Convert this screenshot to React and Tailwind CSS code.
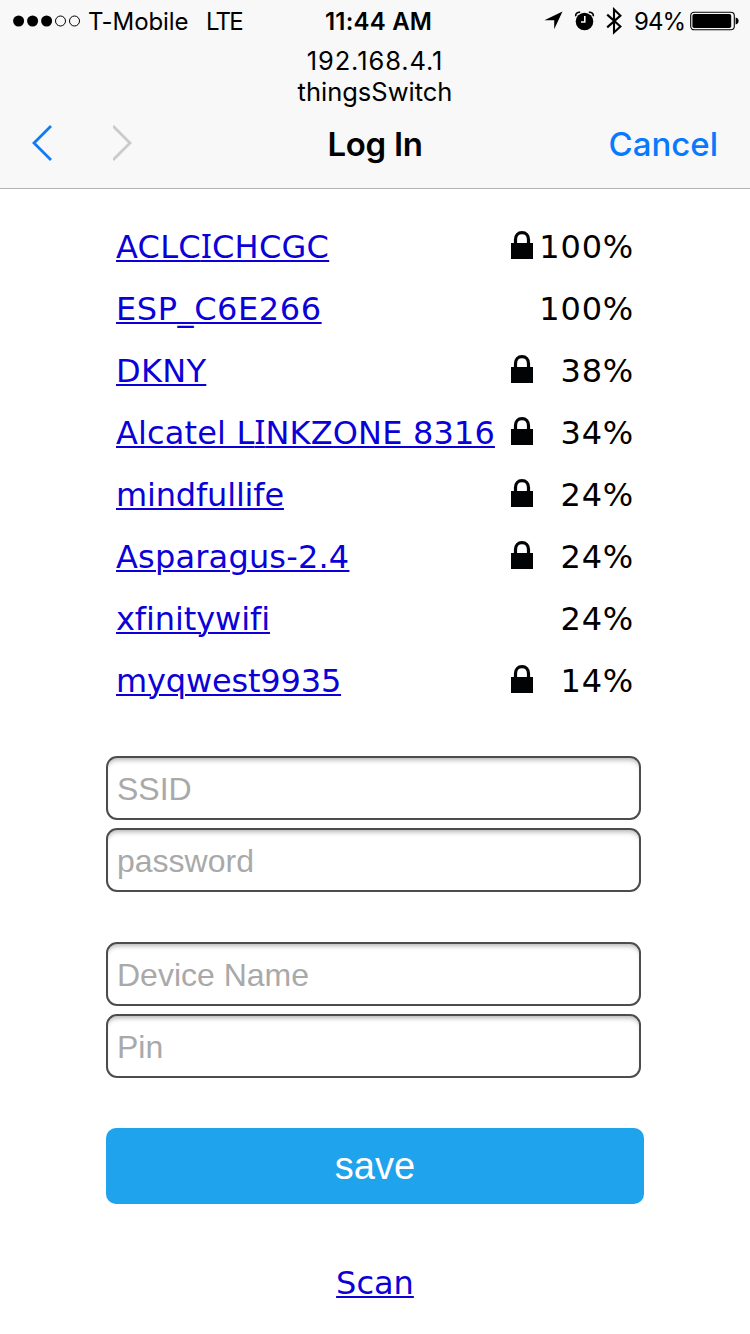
import React from "react";

const networks = [
  { name: "ACLCICHCGC", tracking: "tracking-[0.26px]", locked: true, signal: "100%" },
  { name: "ESP_C6E266", tracking: "tracking-[0.58px]", locked: false, signal: "100%" },
  { name: "DKNY", tracking: "tracking-[0.3px]", locked: true, signal: "38%" },
  { name: "Alcatel LINKZONE 8316", tracking: "tracking-[0.15px]", locked: true, signal: "34%" },
  { name: "mindfullife", tracking: "tracking-[-0.17px]", locked: true, signal: "24%" },
  { name: "Asparagus-2.4", tracking: "tracking-[0.19px]", locked: true, signal: "24%" },
  { name: "xfinitywifi", tracking: "tracking-[-0.09px]", locked: false, signal: "24%" },
  { name: "myqwest9935", tracking: "tracking-[-0.17px]", locked: true, signal: "14%" },
];

function Lock() {
  return (
    <svg width="22" height="28" viewBox="0 0 22 28" fill="none">
      <rect y="12" width="22" height="16" fill="#020305" />
      <path d="M4.5 13V8.5C4.5 4.4 7 1.6 11 1.6s6.5 2.8 6.5 6.9V13" stroke="#020305" strokeWidth="3.2" />
    </svg>
  );
}

function NetworkName({ name }) {
  return name.split(/(I)/).map((part, i) =>
    part === "I" ? (
      <span key={i} className="font-['Noto_Sans',sans-serif] leading-none">I</span>
    ) : (
      part
    )
  );
}

function StatusBar() {
  return (
    <div className="flex h-[41px] items-center text-[24px] leading-10">
      <div className="flex w-[325px] items-center pl-[13px]">
        <svg className="shrink-0" width="68" height="12" viewBox="0 0 68 12">
          <circle cx="5.6" cy="6" r="5.5" />
          <circle cx="19.6" cy="6" r="5.5" />
          <circle cx="33.6" cy="6" r="5.5" />
          <circle cx="47.5" cy="6" r="5" fill="none" stroke="#000" />
          <circle cx="61.5" cy="6" r="5" fill="none" stroke="#000" />
        </svg>
        <span className="ml-[7px] w-[118px] pt-[2px] tracking-[-0.1px]">T-Mobile</span>
        <span className="pt-[2px] tracking-[-1.8px]">LTE</span>
      </div>
      <span className="w-[219px] pt-[2px] font-semibold tracking-[0.2px]">11:44 AM</span>
      <svg className="shrink-0" width="19" height="19" viewBox="0 0 19 19">
        <path d="M18.5 0.5L10.2 18.3V9.3L0.4 9.2Z" />
      </svg>
      <svg className="ml-[12px] shrink-0" width="20" height="20" viewBox="0 0 20 20">
        <circle cx="9.5" cy="10.5" r="8.8" />
        <path d="M9.8 5V11H6" fill="none" stroke="#f8f8f8" strokeWidth="1.6" />
        <path d="M0.8 5.2C0.2 2.7 2.6 0.8 5.2 1.3M18.2 5.2C18.8 2.7 16.4 0.8 13.8 1.3" fill="none" stroke="#000" strokeWidth="1.6" />
      </svg>
      <svg className="ml-[11px] shrink-0" width="17" height="28" viewBox="0 0 17 28">
        <path d="M1.2 7.6L14.4 19.4L8 25.4V2.4L14.4 8.6L1.2 20.4" fill="none" stroke="#000" strokeWidth="2.1" />
      </svg>
      <span className="ml-[11px] w-[56px] pt-[2px] tracking-[-1px]">94%</span>
      <svg className="shrink-0" width="49" height="20" viewBox="0 0 49 20">
        <rect x="0.7" y="1.2" width="43.6" height="17.6" rx="3.5" fill="none" stroke="#000" strokeWidth="1.1" />
        <rect x="2.4" y="3" width="38.8" height="14" rx="1.8" />
        <path d="M45.6 6.5C49.6 7.3 49.6 12.7 45.6 13.5Z" />
      </svg>
    </div>
  );
}

function Field({ placeholder, type = "text" }) {
  return (
    <input
      type={type}
      placeholder={placeholder}
      className="block h-16 w-[535px] rounded-[11px] border-2 border-[#4c4c4c] bg-white px-[9px] pt-[2px] font-['Liberation_Sans',Arial,sans-serif] text-[32px] shadow-[inset_0_5px_5px_-3px_rgba(0,0,0,0.3)] placeholder:text-[#a9a9a9] placeholder:opacity-100"
    />
  );
}

export default function App() {
  return (
    <div className="h-[1334px] w-[750px] overflow-hidden bg-white font-['DejaVu_Sans',Verdana,sans-serif] text-[32px] text-black">
      <header className="h-[189px] border-b border-[#b2b2b2] bg-[#f8f8f8] font-['Inter',sans-serif]">
        <StatusBar />
        <div className="pt-[4px] text-center text-[25.5px] leading-[31px]">
          <div className="tracking-[0.9px]">192.168.4.1</div>
          <div>thingsSwitch</div>
        </div>
        <nav className="grid h-[72px] grid-cols-[250px_250px_250px] items-center text-[33px]">
          <div className="flex gap-[60px] pb-[1px] pl-[31px]">
            <svg width="22" height="38" viewBox="0 0 22 38" fill="none" stroke="#0f7bf5" strokeWidth="2.8">
              <path d="M20 2L3 19L20 36" />
            </svg>
            <svg width="22" height="38" viewBox="0 0 22 38" fill="none" stroke="#cacaca" strokeWidth="2.8">
              <path d="M0 2L17 19L0 36" />
            </svg>
          </div>
          <h1 className="pt-[4px] text-center font-semibold tracking-[-0.3px]">Log In</h1>
          <button className="pr-[32px] pt-[4px] text-right font-medium text-[#087aff]">Cancel</button>
        </nav>
      </header>

      <main className="flex flex-col pl-[106px] pt-[27px]">
        <ul className="pl-[10px]">
          {networks.map((n) => (
            <li key={n.name} className="flex h-[62px] leading-[62px]">
              <a
                href="#"
                className={"flex-none whitespace-nowrap text-[#0c00d8] underline decoration-2 underline-offset-[2px] " + n.tracking}
              >
                <NetworkName name={n.name} />
              </a>
              <div className="ml-auto flex w-[239px] shrink-0 items-start">
                <span className="w-[22px] pt-[15px]">{n.locked && <Lock />}</span>
                <span className="w-[101px] text-right tracking-[0.8px]">{n.signal}</span>
              </div>
            </li>
          ))}
        </ul>

        <div className="mt-[44px] flex flex-col gap-2">
          <Field placeholder="SSID" />
          <Field placeholder="password" />
        </div>
        <div className="mt-[50px] flex flex-col gap-2">
          <Field placeholder="Device Name" />
          <Field placeholder="Pin" />
        </div>
        <button className="mt-[50px] h-[76px] w-[538px] rounded-[10px] bg-[#1fa3ec] font-['Liberation_Sans',Arial,sans-serif] text-[38px] text-white">
          save
        </button>
        <div className="w-[538px] pt-[48px] text-center leading-[62px]">
          <a href="#" className="text-[#0c00d8] underline decoration-2 underline-offset-[2px]">Scan</a>
        </div>
      </main>
    </div>
  );
}
